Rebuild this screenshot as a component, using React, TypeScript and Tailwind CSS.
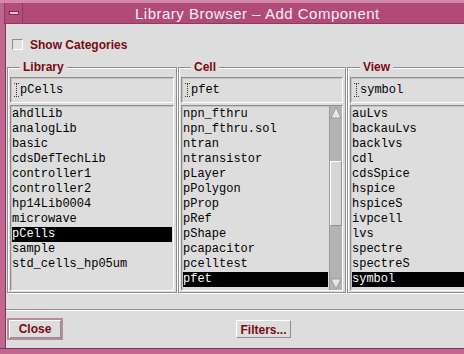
import React from "react";

const LIBRARIES = ["ahdlLib", "analogLib", "basic", "cdsDefTechLib", "controller1", "controller2", "hp14Lib0004", "microwave", "pCells", "sample", "std_cells_hp05um"];
const CELLS = ["npn_fthru", "npn_fthru.sol", "ntran", "ntransistor", "pLayer", "pPolygon", "pProp", "pRef", "pShape", "pcapacitor", "pcelltest", "pfet"];
const VIEWS = ["auLvs", "backauLvs", "backlvs", "cdl", "cdsSpice", "hspice", "hspiceS", "ivpcell", "lvs", "spectre", "spectreS", "symbol"];

const mono = "font-['Liberation_Mono',monospace] text-[12px]";
const label = "font-['Liberation_Sans',Arial,sans-serif] font-bold text-[12px] text-[#7c0a10]";

// dotted I-beam text cursor
function Cursor() {
  return (
    <svg width="5" height="14" viewBox="0 0 5 14" className="shrink-0">
      <path d="M0 0.5h5M0 13.5h5" stroke="#333" strokeWidth="1" strokeDasharray="1 1" />
      <path d="M2.5 1v12" stroke="#333" strokeWidth="1" strokeDasharray="1 1" />
    </svg>
  );
}

function Scrollbar() {
  return (
    <div className="w-[13px] shrink-0 flex flex-col bg-[#b3b3b3] border-l border-[#9a9a9a]">
      <svg width="12" height="13" viewBox="0 0 12 13">
        <path d="M6 1 L11 12 L1 12 Z" fill="#e6e6e6" stroke="#9c9c9c" />
      </svg>
      <div className="h-[42px]" />
      <div className="h-[65px] bg-[#d6d6d6] border-t border-l border-white border-b border-r border-b-[#8e8e8e] border-r-[#8e8e8e]" />
      <div className="flex-1" />
      <svg width="12" height="12" viewBox="0 0 12 12">
        <path d="M1 1 L11 1 L6 11 Z" fill="#e6e6e6" stroke="#9c9c9c" />
      </svg>
    </div>
  );
}

function Group({
  title,
  value,
  items,
  selected,
  scroll,
  width,
}: {
  title: string;
  value: string;
  items: string[];
  selected: string;
  scroll?: boolean;
  width: string;
}) {
  return (
    <div className={`relative ${width} shrink-0 h-[226px] border border-[#8e8e8e] shadow-[inset_1px_1px_0_#fff,1px_1px_0_#fff] pt-[9px] px-[2px] pb-[1px] flex flex-col gap-[2px]`}>
      <span className={`absolute -top-[8px] left-[12px] px-[3px] bg-[#dddddd] leading-[15px] ${label}`}>{title}</span>
      <div className="h-[26px] flex items-center gap-[1px] pl-[3px] border border-[#8e8e8e] border-b-white border-r-white shadow-[inset_1px_1px_0_#c4c4c4]">
        <Cursor />
        <span className={`${mono} text-black`}>{value}</span>
      </div>
      <div className="h-[186px] flex border border-[#8e8e8e] border-b-white border-r-white shadow-[inset_1px_1px_0_#c4c4c4]">
        <ul className="flex-1 min-w-0 pt-[1px] px-[1px]">
          {items.map((it) => (
            <li
              key={it}
              className={`h-[15px] leading-[15px] whitespace-nowrap ${mono} ${it === selected ? "bg-black text-white" : "text-black"}`}
            >
              {it}
            </li>
          ))}
        </ul>
        {scroll && <Scrollbar />}
      </div>
    </div>
  );
}

export default function App() {
  return (
    <div className="w-[464px] h-[354px] overflow-hidden bg-[#c06690] flex flex-col">
      <div className="h-[3px] bg-[#d08aa8]" />
      <div className="h-[21px] flex">
        <div className="w-[5px] bg-[#c06690] border-r border-[#8c3a62]" />
        <div className="w-[18px] bg-[#b54d7b] border-r border-b border-[#8c3a62] flex items-center justify-center">
          <div className="w-[10px] h-[4px] bg-[#e8c8d6] border border-[#7a2c52]" />
        </div>
        <div className="flex-1 bg-[#b24a79] border-b border-[#8c3a62] flex items-center pl-[112px]">
          <span className="font-['Liberation_Sans',Arial,sans-serif] text-[15px] tracking-[0.5px] text-[#f6eef2] leading-none">
            Library Browser – Add Component
          </span>
        </div>
      </div>
      <div className="h-[324px] flex">
        <div className="w-[6px] shrink-0 bg-[#c06690] border-r border-[#7e3358]" />
        <div className="flex-1 min-w-0 bg-[#dddddd] flex flex-col">
          <div className="mt-[15px] h-[11px] flex items-center gap-[7px] pl-[6px]">
            <div className="w-[11px] h-[11px] border border-[#8e8e8e] border-b-white border-r-white bg-[#e2e2e2]" />
            <span className={label}>Show Categories</span>
          </div>
          <div className="mt-[17px] flex gap-[1px] pl-[1px]">
            <Group title="Library" value="pCells" items={LIBRARIES} selected="pCells" width="w-[170px]" />
            <Group title="Cell" value="pfet" items={CELLS} selected="pfet" scroll width="w-[168px]" />
            <Group title="View" value="symbol" items={VIEWS} selected="symbol" width="w-[180px]" />
          </div>
          <div className="mt-[16px] h-[2px] border-t border-[#8e8e8e] border-b border-b-white" />
          <div className="mt-[7px] h-[22px] flex items-center pl-[1px]">
            <button className={`w-[56px] h-[22px] border-2 border-[#b88a9c] bg-[#dddddd] shadow-[inset_1px_1px_0_#fff,inset_-1px_-1px_0_#8e8e8e] ${label}`}>
              Close
            </button>
            <button className={`ml-[173px] w-[55px] h-[18px] border border-white border-b-[#8e8e8e] border-r-[#8e8e8e] bg-[#dddddd] ${label}`}>
              Filters...
            </button>
          </div>
        </div>
      </div>
      <div className="flex-1 bg-[#c06690] border-t border-[#7e3358]" />
    </div>
  );
}
